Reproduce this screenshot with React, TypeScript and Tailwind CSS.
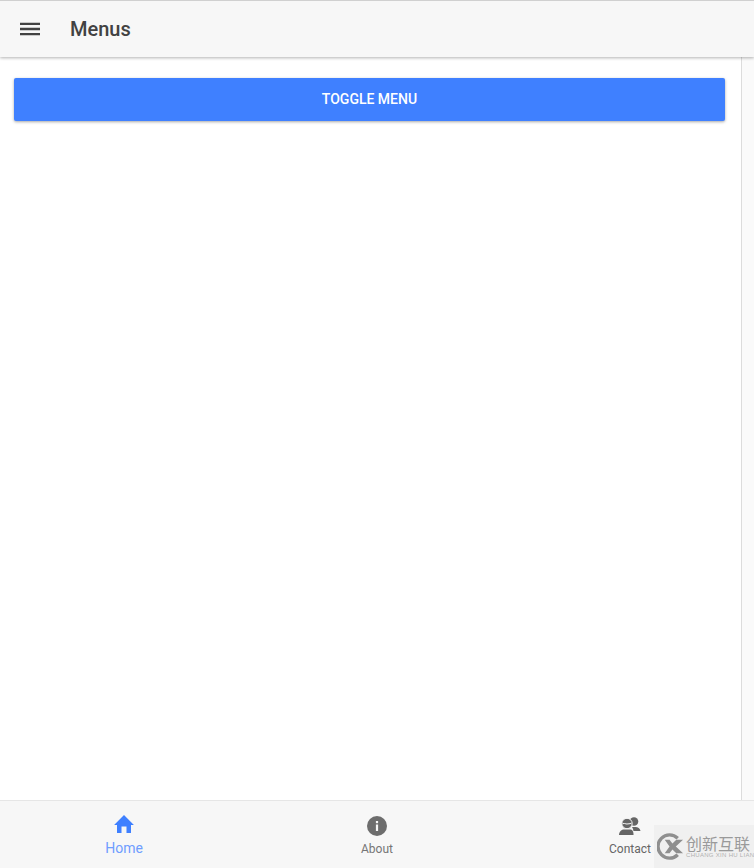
import React from "react";

const font = { fontFamily: "Roboto, 'Noto Sans CJK SC', sans-serif" };

function NavItem({ icon, label, labelClass }: { icon: React.ReactNode; label: string; labelClass: string }) {
  return (
    <div className="flex flex-col items-center pt-[13px]">
      <div className="h-6 w-6">{icon}</div>
      <span className={labelClass}>{label}</span>
    </div>
  );
}

export default function App() {
  return (
    <div className="relative flex h-[868px] w-[754px] flex-col overflow-hidden bg-white font-['Roboto',sans-serif]">
      <header className="z-10 flex h-[57px] shrink-0 items-center border-t border-[#d0d0d0] bg-[#f7f7f7] shadow-[0_1px_3px_rgba(0,0,0,0.3)]">
        <svg className="ml-[18px] h-6 w-6" viewBox="0 0 24 24" fill="#424242">
          <path d="M2 5.700h20v2.400H2zM2 10.800h20v2.400H2zM2 15.900h20v2.400H2z" />
        </svg>
        <h1 className="ml-7 text-[20px] font-medium leading-none text-[#424242]" style={font}>Menus</h1>
      </header>

      <div className="flex flex-1">
        <main className="flex-1 pl-[14px] pr-4 pt-[21px]">
          <button className="flex h-[43px] w-full items-center justify-center rounded-[2px] bg-[#3f80ff] text-[14px] font-medium text-white shadow-[0_1px_3px_rgba(0,0,0,0.35)]">
            TOGGLE MENU
          </button>
        </main>
        <div className="w-[13px] border-l border-[#dcdcdc] bg-[#fafafa]" />
      </div>

      <footer className="-mx-[2.5px] grid h-[68px] shrink-0 grid-cols-3 border-t border-[#e6e6e6] bg-[#f7f7f7]">
        <NavItem
          label="Home"
          labelClass="mt-[2px] text-[14px] leading-[16px] text-[#6f9dff]"
          icon={
            <svg viewBox="0 0 24 24" fill="#3f80ff" className="h-6 w-6">
              <path d="M9.500 19v-6.500h5V19h4.500v-8h2.900L12 1 2.100 11H5v8z" />
            </svg>
          }
        />
        <NavItem
          label="About"
          labelClass="mt-[3px] text-[12px] leading-[16px] text-[#757575]"
          icon={
            <svg viewBox="0 0 24 24" className="h-6 w-6">
              <circle cx="12" cy="12" r="10" fill="#6d6d6d" />
              <rect x="10.900" y="10.500" width="2.200" height="6.500" fill="#f7f7f7" />
              <rect x="10.900" y="7" width="2.200" height="2.200" fill="#f7f7f7" />
            </svg>
          }
        />
        <NavItem
          label="Contact"
          labelClass="mt-[3px] text-[12px] leading-[16px] text-[#666666]"
          icon={
            <svg viewBox="0 0 24 24" fill="#666666" className="h-6 w-6">
              <circle cx="16" cy="7.500" r="4.300" />
              <path d="M14 13h3.500c2.500 0 4.500 1.500 5 4h-7c-.3-1.500-.8-3-1.500-4z" />
              <circle cx="9" cy="9.500" r="5.200" stroke="#f7f7f7" strokeWidth="1" />
              <path d="M4.500 8.800c2 .8 6.500.8 9 0v1c-2.500.8-7 .8-9 0z" fill="#f7f7f7" />
              <path d="M1 21c0-3 2-5.500 5-5.500h6c3 0 3.500 2.500 3.500 5.500z" />
            </svg>
          }
        />
      </footer>

      <div className="absolute bottom-0 right-0 flex h-[43px] w-[100px] items-center bg-[#ededed]/70 pl-[3px]">
        <svg viewBox="0 0 28 28" className="h-[27px] w-[27px] shrink-0">
          <path d="M21.500 5.500A12 12 0 1 0 21.500 22.500" fill="none" stroke="#8f8f8f" strokeWidth="3.500" />
          <path d="M8 7l5 7-5 7h5l3-4 4 4h7l-7.500-7L27 7h-7l-4 4-3-4z" fill="#8f8f8f" />
        </svg>
        <div className="ml-[2px] flex flex-col items-start pt-[1px]">
          <div className="text-[16px] leading-[16px] text-[#9a9a9a]" style={{ fontFamily: "'Noto Sans CJK SC', sans-serif" }}>创新互联</div>
          <div className="mt-[1px] whitespace-nowrap text-[6px] leading-[7px] tracking-[0.300px] text-[#b0b0b0]" style={{ fontFamily: "'Liberation Sans', sans-serif" }}>CHUANG XIN HU LIAN</div>
        </div>
      </div>
    </div>
  );
}
